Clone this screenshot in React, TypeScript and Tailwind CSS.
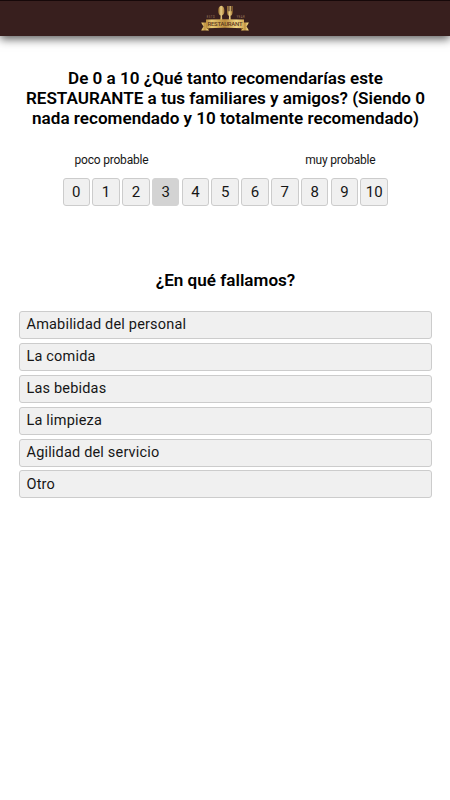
import { useState } from "react";
import clsx from "clsx";

const SCORES = [0, 1, 2, 3, 4, 5, 6, 7, 8, 9, 10];

const REASONS = [
  "Amabilidad del personal",
  "La comida",
  "Las bebidas",
  "La limpieza",
  "Agilidad del servicio",
  "Otro",
];

function Logo() {
  return (
    <svg width="50" height="28" viewBox="0 0 50 28" role="img" aria-label="Restaurant">
      <defs>
        <linearGradient id="gold" x1="0" x2="1" y1="0" y2="0">
          <stop offset="0" stopColor="#b98b3b" />
          <stop offset="0.15" stopColor="#e8c973" />
          <stop offset="0.5" stopColor="#bd8e3e" />
          <stop offset="0.8" stopColor="#efd583" />
          <stop offset="1" stopColor="#d3a955" />
        </linearGradient>
        <linearGradient id="metal" x1="0" x2="1" y1="0" y2="0">
          <stop offset="0" stopColor="#8e6427" />
          <stop offset="0.45" stopColor="#e9cf86" />
          <stop offset="1" stopColor="#a97b34" />
        </linearGradient>
      </defs>

      {/* Cuchara */}
      <path d="M21.300 .8c2 0 3.100 2.300 3.100 5.100 0 2.400-1 4.200-2.400 4.700l.3 4.900h-2l.3-4.900c-1.400-.5-2.400-2.300-2.400-4.700C18.200 3.100 19.300 .8 21.300 .8z" fill="url(#metal)" />

      {/* Tenedor */}
      <path d="M27 1h.9v5.300h.6V1h1v5.300h.6V1h1v5.300h.6V1h.9v6.200c0 2-.9 3.200-2 3.600l.2 4.700h-2l.2-4.700C27.900 10.400 27 9.200 27 7.200z" fill="url(#metal)" />

      {/* Textos laterales */}
      <g fontFamily="Roboto, sans-serif" fontSize="2.600" fill="#a58163">
        <text x="6.700" y="12.700" textLength="8">ESTD</text>
        <text x="36.700" y="12.700" textLength="8">YEAR</text>
      </g>

      {/* Cinta */}
      <path d="M1 17.500h8v8H1l2.500-4z" fill="url(#gold)" />
      <path d="M49 17.500h-8v8h8l-2.500-4z" fill="url(#gold)" />
      <path d="M6 22.500H9v3zM44 22.500H41v3z" fill="#76501d" />
      <path d="M6 14.600q19-.8 38 0v8.600q-19-.8-38 0z" fill="url(#gold)" />
      <text
        x="25"
        y="20.800"
        textAnchor="middle"
        textLength="35"
        fontFamily="Roboto, sans-serif"
        fontSize="5.900"
        fontWeight="500"
        fill="#5c381d"
      >
        RESTAURANT
      </text>
    </svg>
  );
}

export default function App() {
  const [score, setScore] = useState(3);
  const [reasons, setReasons] = useState<string[]>([]);

  const toggleReason = (reason: string) => {
    setReasons((prev) =>
      prev.includes(reason) ? prev.filter((r) => r !== reason) : [...prev, reason]
    );
  };

  return (
    <div className="min-h-screen bg-white font-['Roboto',sans-serif] text-[#161616]">
      <header className="flex h-9 justify-center border-t border-[#160809] bg-[#381f1e] pt-1 shadow-[0_3px_9px_rgba(0,0,0,0.65)]">
        <Logo />
      </header>

      <main className="px-[19px] pt-8">
        {/* Pregunta principal */}
        <section>
          <h1 className="mr-[-1px] text-center text-[17.100px] font-semibold leading-5 text-black">
            De 0 a 10 ¿Qué tanto recomendarías este
            <br />
            RESTAURANTE a tus familiares y amigos? (Siendo 0
            <br />
            nada recomendado y 10 totalmente recomendado)
          </h1>

          <div className="mx-auto mt-6 w-[325px]">
            <div className="flex justify-between px-3 text-xs leading-4 tracking-[-0.2px]">
              <span>poco probable</span>
              <span>muy probable</span>
            </div>
            <div className="mt-2.5 mr-[-0.500px] flex justify-between">
              {SCORES.map((value) => (
                <button
                  key={value}
                  onClick={() => setScore(value)}
                  className={clsx(
                    "h-7 w-[27.500px] rounded-[3px] border text-[15px] leading-none",
                    score === value
                      ? "border-[#d3d3d3] bg-[#d3d3d3]"
                      : "border-[#cccccc] bg-[#f0f0f0]"
                  )}
                >
                  {value}
                </button>
              ))}
            </div>
          </div>
        </section>

        {/* Motivos */}
        <section className="mt-16">
          <h2 className="mr-[-1px] text-center text-[17.100px] font-semibold leading-5 text-black">
            ¿En qué fallamos?
          </h2>
          <div className="mt-[21px] mr-[-1px] flex flex-col gap-[3.900px]">
            {REASONS.map((reason) => (
              <button
                key={reason}
                onClick={() => toggleReason(reason)}
                className={clsx(
                  "h-7 w-full rounded-[3px] border border-[#cccccc] px-[6.500px] pt-px text-left text-[14.500px] leading-none tracking-[0.18px]",
                  reasons.includes(reason) ? "bg-[#d3d3d3]" : "bg-[#f0f0f0]"
                )}
              >
                {reason}
              </button>
            ))}
          </div>
        </section>
      </main>
    </div>
  );
}
